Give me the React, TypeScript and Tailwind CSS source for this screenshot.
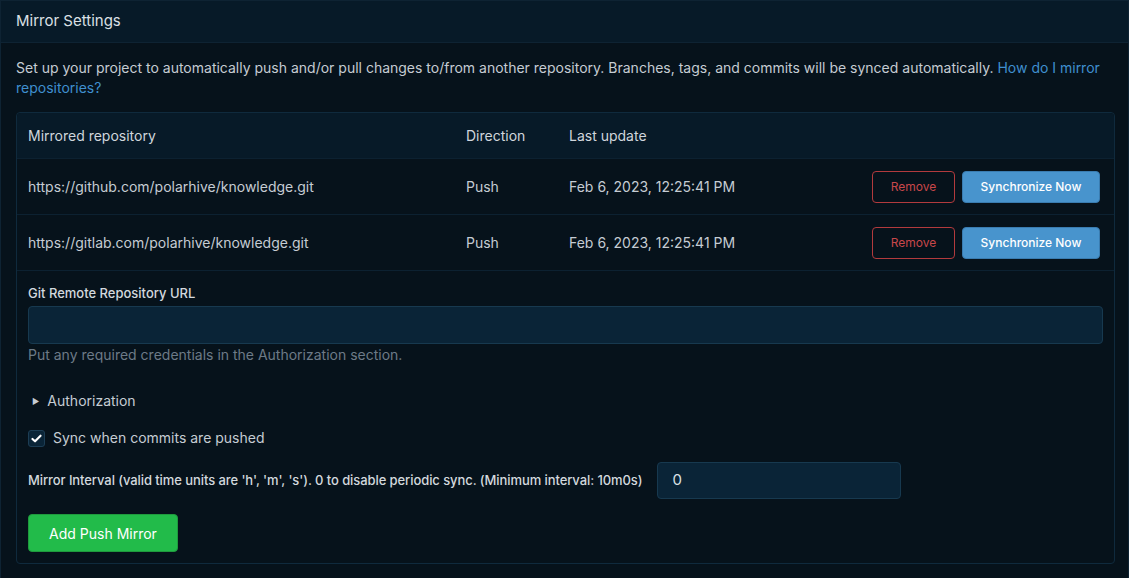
import React from "react";

const mirrors = [
  { url: "https://github.com/polarhive/knowledge.git", direction: "Push", updated: "Feb 6, 2023, 12:25:41 PM" },
  { url: "https://gitlab.com/polarhive/knowledge.git", direction: "Push", updated: "Feb 6, 2023, 12:25:41 PM" },
];

export default function App() {
  return (
    <div className="min-h-screen bg-[#06121b] font-['Inter','Noto_Sans',sans-serif] text-[14px] text-[#c5ccd3]">
      <div className="border-x border-t border-[#0e2333]">
        {/* header */}
        <div className="flex h-[42px] items-center border-b border-[#0e2333] bg-[#071a28] px-[15px] text-[15px] text-[#dbe0e5]">
          Mirror Settings
        </div>

        <div className="pb-6 pl-[15px] pr-[13px] pt-[15px]">
          <p className="mb-[14px] leading-[20px]">
            Set up your project to automatically push and/or pull changes to/from another repository. Branches, tags,
            and commits will be synced automatically.{" "}
            <a className="text-[#3f8fcf]">How do I mirror repositories?</a>
          </p>

          <div className="rounded-[4px] border border-[#0f2a3d]">
            {/* table header */}
            <div className="grid h-[45px] grid-cols-[438px_103px_1fr_auto] items-center rounded-t-[4px] bg-[#071a28] px-[11px] text-[#d0d6dc]">
              <div>Mirrored repository</div>
              <div>Direction</div>
              <div>Last update</div>
              <div />
            </div>

            {mirrors.map((m) => (
              <div
                key={m.url}
                className="grid h-[56px] grid-cols-[438px_103px_1fr_auto] items-center border-t border-[#0c2131] pl-[11px] pr-[14px]"
              >
                <div>{m.url}</div>
                <div>{m.direction}</div>
                <div>{m.updated}</div>
                <div className="flex gap-[7px]">
                  <button className="h-[32px] w-[83px] rounded-[4px] border border-[#b23a3d] text-[12px] text-[#c8474a]">
                    Remove
                  </button>
                  <button className="h-[32px] w-[138px] rounded-[4px] border border-[#3a7cb0] bg-[#4894cd] text-[12px] font-medium text-white">
                    Synchronize Now
                  </button>
                </div>
              </div>
            ))}

            {/* add form */}
            <div className="border-t border-[#0c2131] px-[11px] pb-[11px] pt-[14px]">
              <label className="mb-[5px] block text-[13px] font-medium leading-[16px] text-[#d3d9de]">
                Git Remote Repository URL
              </label>
              <div className="h-[38px] rounded-[4px] border border-[#17394f] bg-[#0a2437]" />
              <p className="mt-[1px] leading-[20px] text-[#6d7a87]">Put any required credentials in the Authorization section.</p>

              <div className="mt-[26px] flex items-center gap-[8px] leading-[20px]">
                <span className="ml-[4px] text-[8px] text-[#c5ccd3]">▶</span>
                <span>Authorization</span>
              </div>

              <div className="mt-[17px] flex items-center gap-[8px] leading-[20px]">
                <span className="flex h-[17px] w-[17px] items-center justify-center rounded-[3px] border border-[#1c3d54] bg-[#0a2437]">
                  <svg viewBox="0 0 16 16" className="h-[13px] w-[13px]" fill="none">
                    <path d="M3 8.5l3.2 3L13 4.5" stroke="white" strokeWidth="2.6" strokeLinecap="round" strokeLinejoin="round" />
                  </svg>
                </span>
                <span>Sync when commits are pushed</span>
              </div>

              <div className="mt-[14px] flex items-center gap-[15px]">
                <label className="text-[13px] font-medium tracking-[-0.08px] text-[#d3d9de]">
                  Mirror Interval (valid time units are 'h', 'm', 's'). 0 to disable periodic sync. (Minimum interval: 10m0s)
                </label>
                <div className="flex h-[37px] w-[244px] items-center rounded-[4px] border border-[#17394f] bg-[#0a2437] px-[14px] text-[15px] text-[#dbe0e5]">
                  0
                </div>
              </div>

              <button className="mt-[15px] h-[38px] w-[150px] rounded-[4px] border border-[#1f9a3e] bg-[#22bb4a] text-[14px] text-white">
                Add Push Mirror
              </button>
            </div>
          </div>
        </div>
      </div>
    </div>
  );
}
